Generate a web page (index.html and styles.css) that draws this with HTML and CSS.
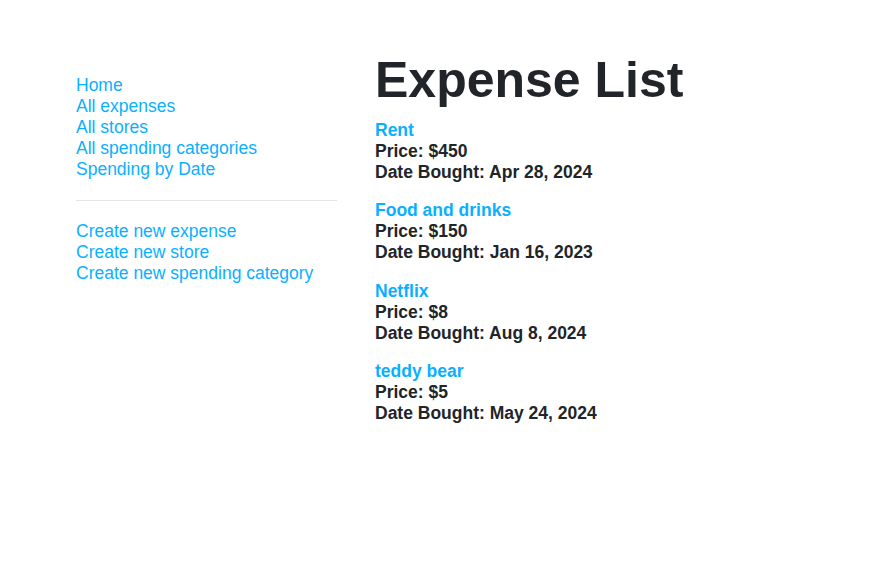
FILE: index.html
```html
<!DOCTYPE html>
<html>
<head>
<meta charset="utf-8">
<title>Expense List</title>
<link rel="stylesheet" href="styles.css">
</head>
<body>
<div class="layout">
  <nav class="sidebar">
    <ul class="nav-list">
      <li><a href="#">Home</a></li>
      <li><a href="#">All expenses</a></li>
      <li><a href="#">All stores</a></li>
      <li><a href="#">All spending categories</a></li>
      <li><a href="#">Spending by Date</a></li>
    </ul>
    <hr class="divider">
    <ul class="nav-list">
      <li><a href="#">Create new expense</a></li>
      <li><a href="#">Create new store</a></li>
      <li><a href="#">Create new spending category</a></li>
    </ul>
  </nav>
  <main class="content">
    <h1 class="title">Expense List</h1>
    <div class="expense">
      <a class="expense-name" href="#">Rent</a>
      <div>Price: $450</div>
      <div>Date Bought: Apr 28, 2024</div>
    </div>
    <div class="expense">
      <a class="expense-name" href="#">Food and drinks</a>
      <div>Price: $150</div>
      <div>Date Bought: Jan 16, 2023</div>
    </div>
    <div class="expense">
      <a class="expense-name" href="#">Netflix</a>
      <div>Price: $8</div>
      <div>Date Bought: Aug 8, 2024</div>
    </div>
    <div class="expense">
      <a class="expense-name" href="#">teddy bear</a>
      <div>Price: $5</div>
      <div>Date Bought: May 24, 2024</div>
    </div>
  </main>
</div>
</body>
</html>
```
FILE: styles.css
```css
html, body {
  margin: 0;
  padding: 0;
  background: #fff;
}
body {
  font-family: "Liberation Sans", Arial, sans-serif;
  font-size: 17.5px;
  line-height: 21px;
  color: #212529;
}
a {
  color: #0ab0ff;
  text-decoration: none;
}
.layout {
  display: flex;
  padding: 52px 0 0 76px;
  gap: 38px;
}
.sidebar {
  width: 261px;
  flex: none;
  padding-top: 23px;
}
.nav-list {
  list-style: none;
  margin: 0;
  padding: 0;
}
.divider {
  border: 0;
  border-top: 1px solid #e5e5e5;
  margin: 20px 0 20px 0;
}
.content {
  flex: 1;
}
.title {
  font-size: 50px;
  font-weight: bold;
  margin: 0 0 11px 0;
  line-height: 57px;
}
.expense {
  font-weight: bold;
  margin-bottom: 17.3px;
}
.expense-name {
  display: block;
}
```
